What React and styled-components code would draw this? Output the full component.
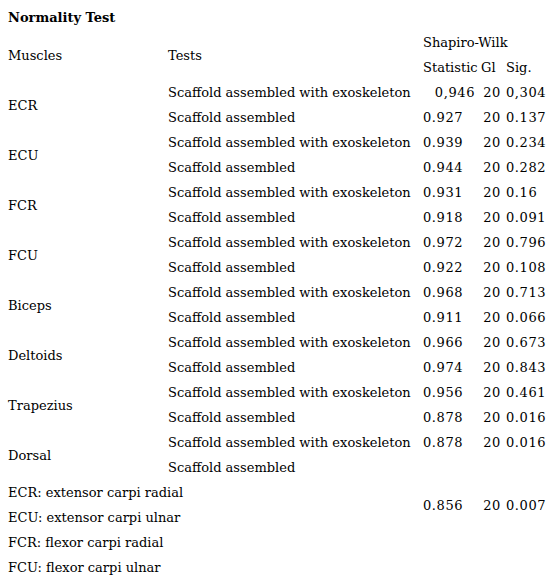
import styled, { createGlobalStyle } from "styled-components";

const GlobalStyle = createGlobalStyle`
  html, body {
    margin: 0;
    padding: 0;
    background: #ffffff;
  }
  body {
    font-family: "DejaVu Serif", "Liberation Serif", serif;
    color: #000;
  }
`;

const Page = styled.div`
  padding: 5px 0 0 8px;
  font-size: 13px;
`;

const Title = styled.div`
  height: 25px;
  line-height: 25px;
  font-weight: bold;
`;

const Grid = styled.div`
  display: grid;
  grid-template-columns: 160px 255px 58px 25px 52px;
  grid-auto-rows: 25px;
`;

const Cell = styled.div`
  display: flex;
  align-items: center;
  white-space: nowrap;
  justify-content: ${(p) => (p.$right ? "flex-end" : "flex-start")};
  padding-right: ${(p) => p.$pr || 0}px;
  grid-row: ${(p) => (p.$rows ? `span ${p.$rows}` : "auto")};
  grid-column: ${(p) => p.$col || "auto"};
`;

const Num = styled(Cell)`
  letter-spacing: 0.6px;
`;

const rows = [
  ["ECR", ["0,946", "20", "0,304", true], ["0.927", "20", "0.137"]],
  ["ECU", ["0.939", "20", "0.234"], ["0.944", "20", "0.282"]],
  ["FCR", ["0.931", "20", "0.16"], ["0.918", "20", "0.091"]],
  ["FCU", ["0.972", "20", "0.796"], ["0.922", "20", "0.108"]],
  ["Biceps", ["0.968", "20", "0.713"], ["0.911", "20", "0.066"]],
  ["Deltoids", ["0.966", "20", "0.673"], ["0.974", "20", "0.843"]],
  ["Trapezius", ["0.956", "20", "0.461"], ["0.878", "20", "0.016"]],
  ["Dorsal", ["0.878", "20", "0.016"], ["", "", ""]],
];

const notes = [
  "ECR: extensor carpi radial",
  "ECU: extensor carpi ulnar",
  "FCR: flexor carpi radial",
  "FCU: flexor carpi ulnar",
];

const tests = ["Scaffold assembled with exoskeleton", "Scaffold assembled"];

export default function App() {
  return (
    <Page>
      <GlobalStyle />
      <Title>Normality Test</Title>
      <Grid>
        <Cell $rows={2}>Muscles</Cell>
        <Cell $rows={2}>Tests</Cell>
        <Cell $col="span 3">Shapiro-Wilk</Cell>
        <Cell>Statistic</Cell>
        <Cell>Gl</Cell>
        <Cell>Sig.</Cell>

        {rows.map(([muscle, a, b]) => [
          <Cell key={muscle} $rows={2} $col="1">
            {muscle}
          </Cell>,
          ...[a, b].flatMap((r, i) => [
            <Cell key={muscle + i + "t"} $col="2">
              {tests[i]}
            </Cell>,
            <Num key={muscle + i + "s"} $right={r[3]} $pr={r[3] ? 6 : 0}>
              {r[0]}
            </Num>,
            <Num key={muscle + i + "g"} $right $pr={5}>
              {r[1]}
            </Num>,
            <Num key={muscle + i + "p"}>{r[2]}</Num>,
          ]),
        ])}

        <Cell $col="1 / span 2">{notes[0]}</Cell>
        <Num $rows={2}>0.856</Num>
        <Num $rows={2} $right $pr={5}>
          20
        </Num>
        <Num $rows={2}>0.007</Num>
        <Cell $col="1 / span 2">{notes[1]}</Cell>
        <Cell $col="1 / span 2">{notes[2]}</Cell>
        <Cell $col="1 / span 2">{notes[3]}</Cell>
      </Grid>
    </Page>
  );
}
